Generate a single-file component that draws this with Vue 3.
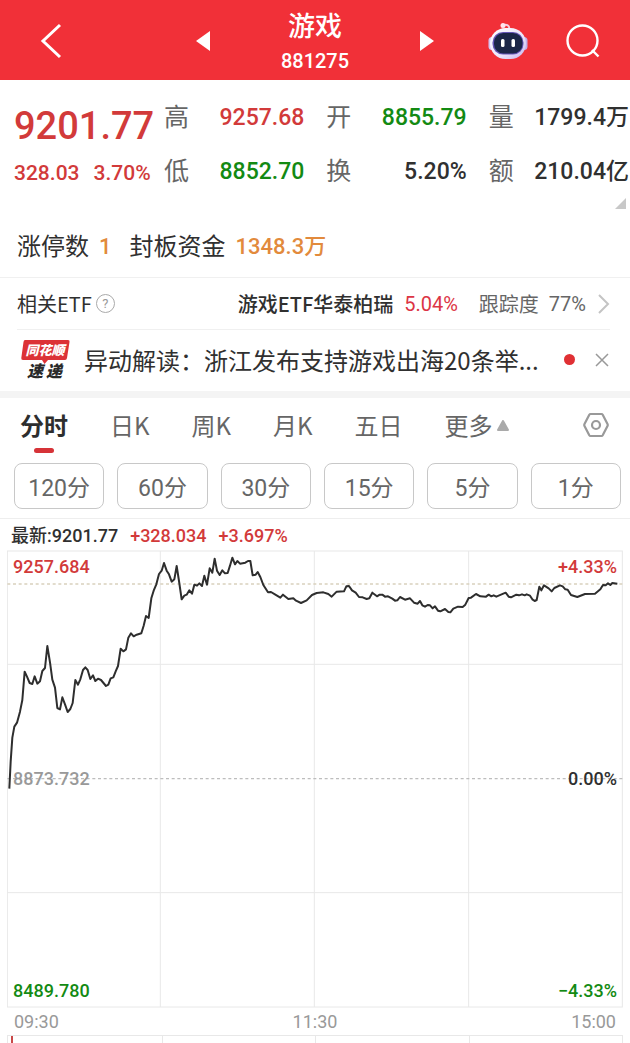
<script setup>
import { ref, computed } from 'vue'

const quotes = [
    { label: '高', value: '9257.68', tone: 'up' },
    { label: '开', value: '8855.79', tone: 'down' },
    { label: '量', value: '1799.4万', tone: '' },
    { label: '低', value: '8852.70', tone: 'down' },
    { label: '换', value: '5.20%', tone: '' },
    { label: '额', value: '210.04亿', tone: '' },
]

const tabs = ['分时', '日K', '周K', '月K', '五日']
const activeTab = ref('分时')
const periods = ['120分', '60分', '30分', '15分', '5分', '1分']

// intraday line, three chart units to one pixel
const prices = [
    [28, 731], [32, 650], [37, 578], [43, 545], [51, 533], [60, 500], [67, 465], [74, 380], [81, 395],
    [89, 414], [97, 417], [104, 394], [112, 416], [120, 409], [127, 378], [135, 369], [142, 303],
    [150, 352], [157, 404], [165, 428], [172, 489], [180, 493], [187, 457], [195, 478], [203, 501],
    [211, 492], [218, 474], [226, 405], [234, 419], [241, 403], [249, 375], [256, 367], [263, 375],
    [271, 402], [279, 391], [286, 408], [294, 401], [303, 405], [318, 423], [325, 419], [332, 400],
    [340, 397], [347, 379], [354, 363], [362, 311], [370, 319], [378, 313], [385, 278], [393, 265],
    [401, 274], [410, 269], [424, 265], [431, 242], [438, 213], [446, 219], [454, 160], [461, 137],
    [469, 118], [477, 87], [485, 77], [492, 54], [500, 77], [507, 88], [515, 110], [523, 103],
    [530, 63], [537, 108], [545, 163], [553, 152], [560, 149], [568, 136], [576, 146], [583, 119],
    [591, 122], [598, 115], [606, 123], [613, 92], [621, 119], [629, 70], [637, 83], [644, 41],
    [651, 77], [659, 90], [667, 76], [675, 85], [683, 84], [690, 62], [697, 38], [705, 58], [712, 48],
    [720, 56], [736, 53], [744, 48], [751, 48], [758, 91], [767, 89], [773, 81], [781, 96], [790, 120],
    [804, 142], [813, 141], [826, 149], [841, 158], [849, 149], [865, 162], [880, 160], [888, 167],
    [903, 174], [920, 166], [936, 150], [950, 144], [970, 142], [985, 147], [995, 155], [1010, 140],
    [1032, 139], [1039, 124], [1047, 123], [1056, 136], [1067, 143], [1077, 156], [1088, 157],
    [1100, 162], [1108, 160], [1117, 143], [1131, 154], [1139, 149], [1147, 149], [1155, 155],
    [1164, 154], [1177, 161], [1185, 167], [1192, 166], [1200, 156], [1215, 164], [1230, 160],
    [1242, 173], [1253, 176], [1260, 168], [1267, 181], [1275, 185], [1283, 180], [1290, 181],
    [1298, 190], [1305, 184], [1314, 197], [1321, 199], [1335, 192], [1345, 201], [1351, 202],
    [1360, 191], [1374, 185], [1388, 186], [1396, 179], [1406, 159], [1413, 158], [1428, 147],
    [1441, 154], [1458, 155], [1466, 149], [1474, 154], [1481, 151], [1489, 155], [1517, 143],
    [1526, 155], [1533, 157], [1549, 149], [1557, 151], [1566, 148], [1574, 151], [1580, 148],
    [1590, 152], [1597, 163], [1604, 168], [1610, 165], [1618, 125], [1624, 136], [1632, 121],
    [1646, 130], [1655, 139], [1663, 129], [1680, 121], [1688, 124], [1696, 133], [1703, 134],
    [1713, 150], [1732, 156], [1755, 147], [1785, 146], [1801, 133], [1809, 120], [1817, 121],
    [1824, 115], [1831, 120], [1837, 114], [1852, 116],
]
const points = computed(() => prices.map((p) => p.join(',')).join(' '))
</script>

<template>
    <div class="page">
        <header class="header">
            <div class="side">
                <button class="icon-btn" aria-label="返回">
                    <svg width="22" height="36" viewBox="0 0 22 36">
                        <path d="M20 2L3 18L20 34" fill="none" stroke="#fff" stroke-width="3" />
                    </svg>
                </button>
            </div>
            <div class="switcher">
                <button class="icon-btn" aria-label="上一个">
                    <svg width="14" height="20" viewBox="0 0 14 20"><path d="M14 0V20L0 10Z" fill="#fff" /></svg>
                </button>
                <div class="title">
                    <h1>游戏</h1>
                    <span>881275</span>
                </div>
                <button class="icon-btn" aria-label="下一个">
                    <svg width="14" height="20" viewBox="0 0 14 20"><path d="M0 0V20L14 10Z" fill="#fff" /></svg>
                </button>
            </div>
            <div class="side end">
                <button class="icon-btn" aria-label="智能助手">
                    <svg width="40" height="38" viewBox="0 0 40 38">
                        <defs>
                            <linearGradient id="shell" x1="0" y1="0" x2="1" y2="1">
                                <stop offset="0" stop-color="#fff" />
                                <stop offset="0.6" stop-color="#ece4fa" />
                                <stop offset="1" stop-color="#c5b4ee" />
                            </linearGradient>
                        </defs>
                        <path d="M14 3.500Q21 1 21.500 7" fill="none" stroke="#f6cfe0" stroke-width="2" />
                        <circle cx="15" cy="3.500" r="2.500" fill="#ffe4ee" />
                        <rect x="0.500" y="15" width="7" height="13" rx="3.500" fill="#d5c3f1" />
                        <rect x="32.500" y="15" width="7" height="13" rx="3.500" fill="#c2b0e9" />
                        <rect x="2" y="6" width="36" height="31" rx="15.500" fill="url(#shell)" />
                        <rect x="4.500" y="10" width="31" height="22.500" rx="10.500" fill="#6455b5" />
                        <rect x="6" y="11" width="28.500" height="20.500" rx="9.500" fill="#1c2647" />
                        <rect x="13" y="17" width="3.500" height="8" rx="1.500" fill="#fff" />
                        <rect x="23.500" y="17" width="3.500" height="8" rx="1.500" fill="#fff" />
                    </svg>
                </button>
                <button class="icon-btn" aria-label="搜索">
                    <svg width="34" height="34" viewBox="0 0 34 34" fill="none" stroke="#fff" stroke-width="2.400">
                        <circle cx="16.500" cy="16.500" r="15" />
                        <path d="M26 26L32.500 32.500" />
                    </svg>
                </button>
            </div>
        </header>

        <section class="quote">
            <div class="price">
                <strong>9201.77</strong>
                <div class="change"><span>328.03</span><span>3.70%</span></div>
            </div>
            <dl class="stats">
                <div v-for="q in quotes" :key="q.label" class="stat">
                    <dt>{{ q.label }}</dt>
                    <dd :class="q.tone">{{ q.value }}</dd>
                </div>
            </dl>
        </section>
        <div class="expand">
            <svg width="11" height="11" viewBox="0 0 11 11"><path d="M11 0V11H0Z" fill="#c8c8c8" /></svg>
        </div>

        <section class="limit">
            <span>涨停数</span><b>1</b>
            <span class="fund">封板资金</span><b>1348.3万</b>
        </section>

        <section class="etf">
            <span>相关ETF</span>
            <button class="icon-btn help" aria-label="说明">?</button>
            <a href="#" class="etf-link">
                <span class="etf-name">游戏ETF华泰柏瑞</span>
                <span class="etf-up">5.04%</span>
                <span class="track">跟踪度</span>
                <span class="track-value">77%</span>
                <svg width="12" height="20" viewBox="0 0 12 20">
                    <path d="M1 1L10 10L1 19" fill="none" stroke="#c4c4c4" stroke-width="2" />
                </svg>
            </a>
        </section>

        <section class="news">
            <svg class="logo" width="49" height="42" viewBox="0 0 49 42">
                <path d="M4 1H47Q49 1 48.500 3L46 19Q45.700 21 44 21H27L23.500 25L21 21H2Q0 21 0.300 19L2.500 3Q2.800 1 4 1Z" fill="#dc3237" />
                <text x="24" y="16" class="logo-top">同花顺</text>
                <text x="14" y="38" class="logo-bottom">速</text>
                <text x="33" y="38" class="logo-bottom">递</text>
            </svg>
            <a href="#" class="headline">异动解读：浙江发布支持游戏出海20条举...</a>
            <i class="dot"></i>
            <button class="icon-btn" aria-label="关闭">
                <svg width="14" height="14" viewBox="0 0 14 14">
                    <path d="M1 1L13 13M13 1L1 13" stroke="#999" stroke-width="1.500" />
                </svg>
            </button>
        </section>

        <nav class="tabs">
            <button
                v-for="tab in tabs"
                :key="tab"
                class="tab"
                :class="{ active: tab === activeTab }"
                @click="activeTab = tab"
            >{{ tab }}</button>
            <button class="tab more">
                更多
                <svg width="12" height="11" viewBox="0 0 12 11"><path d="M6 1L11 10H1Z" fill="#aaa" stroke="#aaa" stroke-width="2" stroke-linejoin="round" /></svg>
            </button>
            <button class="icon-btn settings" aria-label="设置">
                <svg width="26" height="26" viewBox="0 0 26 26" fill="none" stroke="#999" stroke-width="2.200" stroke-linejoin="round">
                    <path d="M7.500 2Q6.700 2 6.300 2.700L1.500 12Q1 13 1.500 14L6.300 23.300Q6.700 24 7.500 24H18.500Q19.300 24 19.700 23.300L24.500 14Q25 13 24.500 12L19.700 2.700Q19.300 2 18.500 2Z" />
                    <circle cx="13" cy="13" r="4" />
                </svg>
            </button>
        </nav>

        <div class="periods">
            <button v-for="p in periods" :key="p" class="period">{{ p }}</button>
        </div>

        <div class="latest">
            <span>最新:9201.77</span>
            <span class="up">+328.034</span>
            <span class="up">+3.697%</span>
        </div>

        <div class="chart">
            <svg class="plot" viewBox="21 15 1848 1374">
                <g fill="none" stroke="#e8e8e8" stroke-width="3">
                    <rect x="22" y="18" width="1845" height="1368" />
                    <path d="M22 358H1867M22 1043H1867M481 18V1386M943 18V1386M1406 18V1386" />
                </g>
                <path d="M22 117H1867" stroke="#d9d1bd" stroke-width="4" stroke-dasharray="9 8" />
                <path d="M22 701H1867" stroke="#bdbdbd" stroke-width="4" stroke-dasharray="9 8" />
                <polyline :points="points" fill="none" stroke="#2e2e2e" stroke-width="6" stroke-linejoin="round" />
            </svg>
            <div class="scale">
                <div><span class="up">9257.684</span><span class="up">+4.33%</span></div>
                <div><span class="base">8873.732</span><span>0.00%</span></div>
                <div><span class="down">8489.780</span><span class="down">−4.33%</span></div>
            </div>
        </div>
        <div class="times"><span>09:30</span><span>11:30</span><span>15:00</span></div>
        <div class="volume"><i></i><i></i><i></i><i></i></div>
    </div>
</template>

<style>
body {
    background: #fff;
}
</style>

<style scoped>
.page {
    font-family: Roboto, "Noto Sans CJK SC", sans-serif;
    color: #303030;
    overflow: hidden;
}

button {
    padding: 0;
    border: none;
    background: none;
    font: inherit;
    color: inherit;
}

a {
    color: inherit;
    text-decoration: none;
}

svg {
    display: block;
}

.up {
    color: #d23a3a;
}

.down {
    color: #138a13;
}

.header {
    display: grid;
    grid-template-columns: 1fr auto 1fr;
    align-items: center;
    height: 78px;
    padding-top: 2px;
    background: #f13038;
    color: #fff;
}

.side {
    display: flex;
    align-items: center;
    padding-left: 40px;
}

.side.end {
    justify-content: flex-end;
    gap: 38px;
    padding: 0 30px 0 0;
}

.switcher {
    display: flex;
    align-items: center;
    gap: 71px;
}

.title {
    display: flex;
    flex-direction: column;
    align-items: center;
    gap: 6px;
    padding-top: 2px;
    font-size: 20px;
    line-height: 28px;
    font-weight: 500;
}

.title h1 {
    margin: 0;
    font-family: "Noto Sans CJK SC", sans-serif;
    font-size: 27px;
    line-height: 32px;
    font-weight: 500;
}

.quote {
    display: flex;
    padding: 12px 1px 0 14px;
    font-weight: 500;
}

.price {
    width: 150px;
    color: #d23a3a;
}

.price strong {
    display: block;
    font-size: 38px;
    line-height: 68px;
    font-weight: 500;
}

.change {
    display: flex;
    gap: 14px;
    font-size: 21px;
    line-height: 26px;
}

.stats {
    flex: 1;
    display: grid;
    grid-template-columns: repeat(3, 1fr);
    column-gap: 22px;
    row-gap: 2px;
    margin: 0;
}

.stat {
    display: flex;
    justify-content: space-between;
    font-size: 23px;
    line-height: 52px;
    white-space: nowrap;
}

.stat dt {
    font-size: 25px;
    font-weight: 400;
    color: #666;
}

.stat dd {
    margin: 0;
}

.expand {
    display: flex;
    justify-content: flex-end;
    padding-right: 4px;
}

.limit {
    display: flex;
    align-items: center;
    gap: 10px;
    padding: 22px 17px 14px;
    font-size: 24px;
    line-height: 32px;
    border-bottom: 1px solid #f0f0f0;
}

.limit b {
    font-size: 22px;
    font-weight: 500;
    color: #e28a3c;
}

.fund {
    margin-left: 8px;
}

.etf {
    display: flex;
    align-items: center;
    height: 51px;
    margin: 0 20px 0 17px;
    font-family: "Noto Sans CJK SC", sans-serif;
    font-size: 20px;
    border-bottom: 1px solid #f0f0f0;
}

.help {
    width: 19px;
    height: 19px;
    margin-left: 4px;
    border: 1px solid #aaa;
    border-radius: 50%;
    font-family: Roboto, sans-serif;
    font-size: 13px;
    line-height: 17px;
    color: #999;
}

.etf-link {
    display: flex;
    align-items: center;
    margin-left: auto;
}

.etf-name {
    font-weight: 500;
}

.etf-up,
.track-value {
    font-family: Roboto, sans-serif;
}

.etf-up {
    margin-left: 11px;
    color: #dc3545;
}

.track,
.track-value {
    color: #666;
}

.track {
    margin-left: 21px;
}

.track-value {
    margin: 0 12px 0 10px;
}

.news {
    display: flex;
    align-items: center;
    height: 59px;
    padding: 0 21px 2px;
    border-bottom: 7px solid #f4f4f4;
}

.logo {
    overflow: visible;
}

.logo-top,
.logo-bottom {
    font-family: "Noto Sans CJK SC", sans-serif;
    font-style: italic;
    font-weight: 900;
    text-anchor: middle;
}

.logo-top {
    font-size: 13px;
    fill: #fff;
}

.logo-bottom {
    font-size: 16px;
    fill: #2a2a2a;
}

.headline {
    flex: 1;
    margin-left: 14px;
    font-family: "Noto Sans CJK SC", sans-serif;
    font-size: 24px;
    line-height: 34px;
    white-space: nowrap;
}

.dot {
    width: 11px;
    height: 11px;
    margin-right: 20px;
    border-radius: 50%;
    background: #e03034;
}

.tabs {
    display: flex;
    align-items: center;
    gap: 42px;
    height: 54px;
    padding: 0 21px 11px 20px;
    font-family: "Noto Sans CJK SC", sans-serif;
    font-size: 24px;
    color: #666;
}

.tab {
    position: relative;
    line-height: 54px;
    white-space: nowrap;
}

.tab.active {
    font-weight: 700;
    color: #2e2e2e;
}

.tab.active::after {
    content: "";
    position: absolute;
    left: 50%;
    bottom: -1px;
    width: 20px;
    height: 5px;
    margin-left: -10px;
    border-radius: 3px;
    background: #d63338;
}

.more {
    display: flex;
    align-items: center;
    gap: 4px;
}

.settings {
    margin-left: auto;
}

.periods {
    display: grid;
    grid-template-columns: repeat(6, 1fr);
    gap: 13px;
    padding: 0 9px 9px 14px;
    border-bottom: 1px solid #eee;
}

.period {
    height: 46px;
    border: 1px solid #c8c8c8;
    border-radius: 8px;
    font-size: 23px;
    color: #666;
}

.latest {
    display: flex;
    gap: 12px;
    padding: 3px 11px 0;
    font-size: 18px;
    line-height: 28px;
    font-weight: 500;
}

.chart {
    position: relative;
    margin: 0 7px;
}

.plot {
    width: 100%;
    height: auto;
}

.scale {
    position: absolute;
    inset: 4px 6px;
    display: flex;
    flex-direction: column;
    justify-content: space-between;
    font-size: 18px;
    line-height: 26px;
    font-weight: 500;
}

.scale div {
    display: flex;
    justify-content: space-between;
}

.base {
    color: #999;
}

.times {
    display: flex;
    justify-content: space-between;
    padding: 0 14px;
    font-size: 18px;
    line-height: 27px;
    color: #999;
}

.volume {
    display: grid;
    grid-template-columns: repeat(4, 1fr);
    height: 8px;
    margin: 0 7px;
    border: solid #e8e8e8;
    border-width: 1px 1px 0;
    box-sizing: border-box;
}

.volume i + i {
    border-left: 1px solid #e8e8e8;
}

.volume i:first-child {
    width: 2px;
    margin-left: 3px;
    background: #c94848;
}
</style>
